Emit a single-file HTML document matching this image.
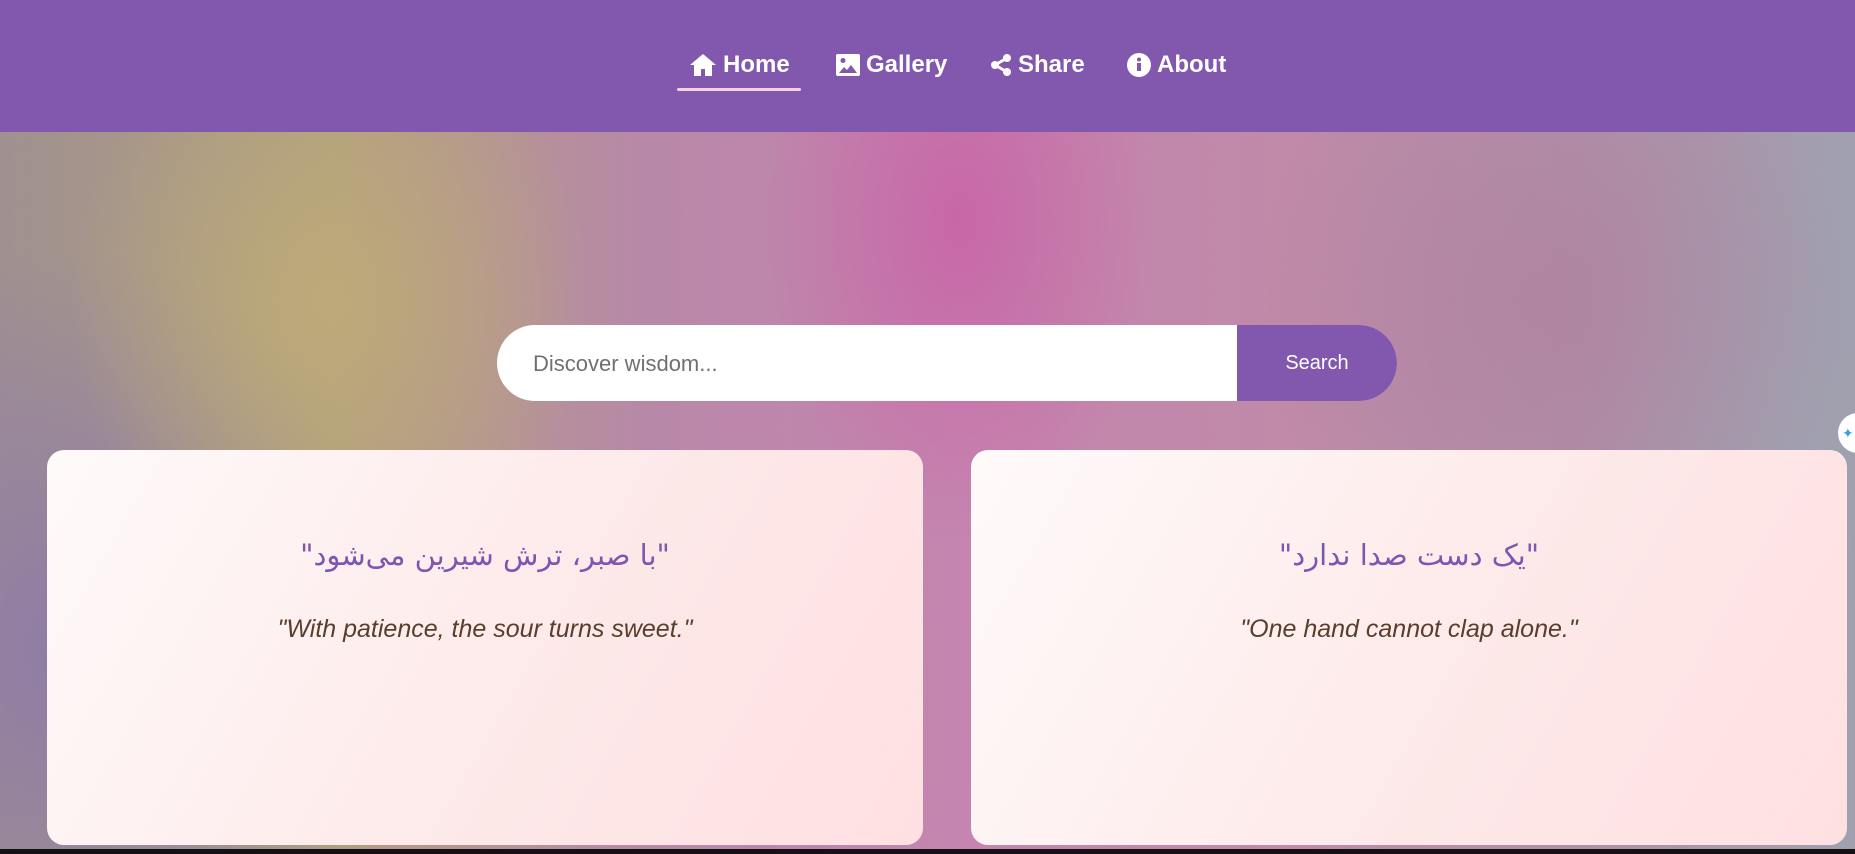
<!DOCTYPE html>
<html><head><meta charset="utf-8"><style>
*{margin:0;padding:0;box-sizing:border-box}
body{width:1855px;height:854px;overflow:hidden;font-family:"Liberation Sans",sans-serif;position:relative;
background:
radial-gradient(ellipse 260px 300px at 330px 300px,rgba(190,170,120,.95),rgba(190,170,120,0) 100%),
radial-gradient(ellipse 200px 320px at 960px 220px,rgba(200,100,165,.9),rgba(200,100,165,0) 100%),
radial-gradient(ellipse 300px 300px at 1550px 300px,rgba(175,130,160,.8),rgba(175,130,160,0) 100%),
radial-gradient(ellipse 300px 400px at 80px 650px,rgba(140,120,170,.9),rgba(140,120,170,0) 100%),
radial-gradient(ellipse 200px 300px at 1800px 400px,rgba(160,160,175,.9),rgba(160,160,175,0) 100%),
linear-gradient(90deg,#a09090 0%,#b0a080 18%,#b888a8 35%,#c585b0 52%,#c08aa8 70%,#b090a8 85%,#a0a0b0 100%);}
nav{position:absolute;top:0;left:0;width:1855px;height:132px;background:#8257ae;}
.item{position:absolute;top:48px;color:#fff;font-weight:bold;font-size:24px;display:flex;align-items:center;gap:6px;height:34px}
.item svg{fill:#fff}
.ul{position:absolute;left:677px;top:88px;width:124px;height:3px;background:#f8d0e0;border-radius:2px}
.search{position:absolute;left:497px;top:325px;width:900px;height:76px;border-radius:38px;background:#fff;overflow:hidden}
.search span{position:absolute;left:36px;top:26px;font-size:22px;color:#707070}
.search b{position:absolute;right:0;top:0;width:160px;height:76px;background:#8257ae;color:#fff;font-weight:normal;font-size:20px;text-align:center;line-height:76px}
.card{position:absolute;top:450px;width:876px;height:395px;border-radius:17px;background:linear-gradient(120deg,#fffafa 0%,#fde8e8 60%,#ffe0e2 100%);text-align:center}
.fa{position:absolute;width:100%;font-family:"DejaVu Sans",sans-serif;font-size:29px;color:#7f55b0;direction:rtl}
.en{position:absolute;width:100%;font-size:25px;font-style:italic;color:#5a3d2b}
.bar{position:absolute;left:0;top:849px;width:1855px;height:5px;background:#151015}
.bubble{position:absolute;left:1838px;top:413px;width:40px;height:40px;border-radius:50%;background:#fff;color:#3a9fe0;font-size:14px;line-height:40px;padding-left:4px}
</style></head><body>
<nav>
<div class="item" style="left:689px"><svg width="28" height="24" viewBox="0 0 28 24"><path d="M14 1 1 12h4v11h7v-7h4v7h7V12h4z"/></svg>Home</div>
<div class="item" style="left:836px"><svg width="24" height="22" viewBox="0 0 24 22"><rect x="0" y="0" width="24" height="22" rx="2" fill="#fff"/><path d="M3 19h18l-6-8-4 5-3-3z" fill="#8257ae"/><circle cx="7" cy="6.5" r="2.5" fill="#8257ae"/></svg>Gallery</div>
<div class="item" style="left:990px"><svg width="22" height="22" viewBox="0 0 22 22"><circle cx="17" cy="4" r="4"/><circle cx="5" cy="11" r="4"/><circle cx="17" cy="18" r="4"/><path d="M5 11 17 4M5 11l12 7" stroke="#fff" stroke-width="3"/></svg>Share</div>
<div class="item" style="left:1127px"><svg width="24" height="24" viewBox="0 0 24 24"><circle cx="12" cy="12" r="12"/><circle cx="12" cy="6.5" r="2" fill="#8257ae"/><rect x="10" y="10" width="4" height="8" fill="#8257ae"/></svg>About</div>
<div class="ul"></div>
</nav>
<div class="search"><span>Discover wisdom...</span><b>Search</b></div>
<div class="card" style="left:47px"><div class="fa" style="top:88px">"با صبر، ترش شیرین می‌شود"</div><div class="en" style="top:165px">"With patience, the sour turns sweet."</div></div>
<div class="card" style="left:971px"><div class="fa" style="top:88px">"یک دست صدا ندارد"</div><div class="en" style="top:165px">"One hand cannot clap alone."</div></div>
<div class="bubble">✦</div>
<div class="bar"></div>
</body></html>
